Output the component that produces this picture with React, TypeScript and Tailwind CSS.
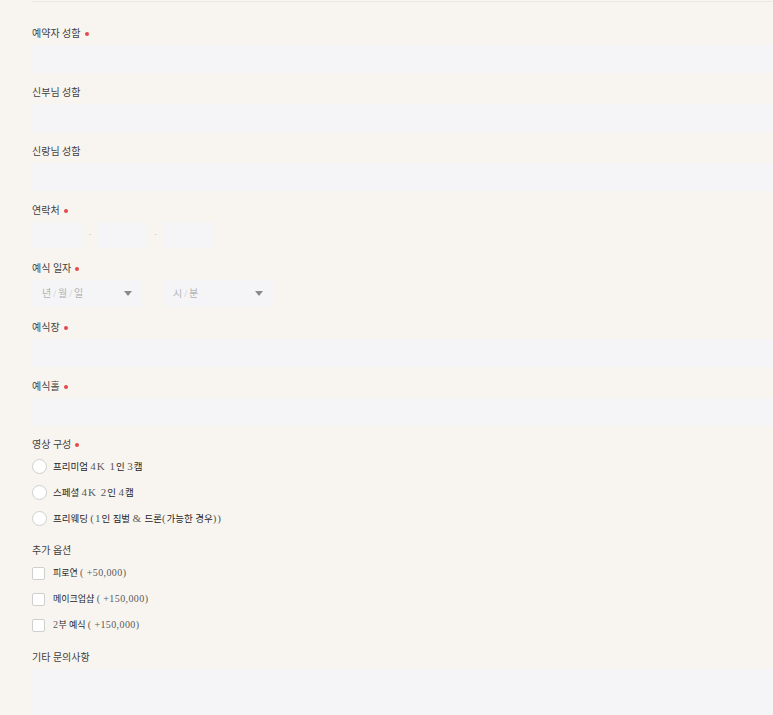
import React from "react";

const Dot = () => (
  <span className="ml-[4px] inline-block w-[4px] h-[4px] rounded-full bg-[#e5484d]" />
);

const Label = ({ text, required }: { text: string; required?: boolean }) => (
  <div className="h-[13px] flex items-center text-[10px] text-[#3f3f3f] leading-none">
    <span>{text}</span>
    {required && <Dot />}
  </div>
);

const Field = ({ label, required }: { label: string; required?: boolean }) => (
  <div className="flex flex-col gap-[5px] pb-[13px]">
    <Label text={label} required={required} />
    <div className="h-[28px] w-full bg-[#f5f5f7]" />
  </div>
);

const Caret = () => (
  <svg width="8" height="5" viewBox="0 0 8 5" className="fill-[#8a8a8a]">
    <path d="M0 0 L8 0 L4 5 Z" />
  </svg>
);

const Select = ({ parts }: { parts: string[] }) => (
  <div className="w-[110px] h-[27px] bg-[#f5f5f7] flex items-center justify-between pl-[10px] pr-[10px] text-[10px] text-[#b3b3b3]">
    <span className="flex items-center">
      {parts.map((p, i) => (
        <React.Fragment key={p}>
          {i > 0 && <span className="mx-[2px] text-[#c4c4c4]">/</span>}
          <span>{p}</span>
        </React.Fragment>
      ))}
    </span>
    <Caret />
  </div>
);

const Radio = ({ children }: { children: React.ReactNode }) => (
  <div className="h-[26px] flex items-center gap-[6px]">
    <span className="w-[15px] h-[15px] rounded-full bg-white border border-[#cfcfcf]" />
    <span className="text-[9.5px] text-[#262626]">{children}</span>
  </div>
);

const Check = ({ children }: { children: React.ReactNode }) => (
  <div className="h-[26px] flex items-center gap-[8px]">
    <span className="w-[13px] h-[13px] rounded-[2px] bg-white border border-[#cfcfcf]" />
    <span className="text-[9px] text-[#262626]">{children}</span>
  </div>
);

const Num = ({ children }: { children: React.ReactNode }) => (
  <span className="text-[10px] text-[#5a5a5a] tracking-[0.4px]">{children}</span>
);

const BigNum = ({ children }: { children: React.ReactNode }) => (
  <span className="text-[11px] text-[#5a5a5a] tracking-[1px]">{children}</span>
);

export default function App() {
  return (
    <div className="min-h-[715px] bg-[#f8f5f0] pt-px pl-8 font-['Liberation_Serif','Noto_Sans_CJK_KR',sans-serif] overflow-hidden">
      <div className="border-t border-[#ece8e2]" />
      <div className="pt-[25px]">
        <Field label="예약자 성함" required />
        <Field label="신부님 성함" />
        <Field label="신랑님 성함" />

        <div className="flex flex-col gap-[5px] pb-[14px]">
          <Label text="연락처" required />
          <div className="flex items-center">
            <div className="w-[51px] h-[26px] bg-[#f5f5f7]" />
            <span className="w-[14px] text-center text-[8px] text-[#c8c8c8]">-</span>
            <div className="w-[51px] h-[26px] bg-[#f5f5f7]" />
            <span className="w-[15px] text-center text-[8px] text-[#c8c8c8]">-</span>
            <div className="w-[51px] h-[26px] bg-[#f5f5f7]" />
          </div>
        </div>

        <div className="flex flex-col gap-[5px] pb-[14px]">
          <Label text="예식 일자" required />
          <div className="flex items-center gap-[21px]">
            <Select parts={["년", "월", "일"]} />
            <Select parts={["시", "분"]} />
          </div>
        </div>

        <Field label="예식장" required />
        <div className="flex flex-col gap-[5px] pb-[12px]">
          <Label text="예식홀" required />
          <div className="h-[28px] w-full bg-[#f5f5f7]" />
        </div>

        <div className="flex flex-col gap-[2px] pb-[13px]">
          <Label text="영상 구성" required />
          <div className="flex flex-col">
            <Radio>
              프리미엄 <BigNum>4K 1</BigNum>인 <BigNum>3</BigNum>캠
            </Radio>
            <Radio>
              스페셜 <BigNum>4K 2</BigNum>인 <BigNum>4</BigNum>캠
            </Radio>
            <Radio>
              프리웨딩 <BigNum>(1</BigNum>인 짐벌 <BigNum>&amp;</BigNum> 드론<BigNum>(</BigNum>가능한 경우<BigNum>))</BigNum>
            </Radio>
          </div>
        </div>

        <div className="flex flex-col gap-[3px] pb-[13px]">
          <Label text="추가 옵션" />
          <div className="flex flex-col">
            <Check>
              피로연 <Num>( +50,000)</Num>
            </Check>
            <Check>
              메이크업샵 <Num>( +150,000)</Num>
            </Check>
            <Check>
              <Num>2</Num>부 예식 <Num>( +150,000)</Num>
            </Check>
          </div>
        </div>

        <div className="flex flex-col gap-[5px]">
          <Label text="기타 문의사항" />
          <div className="h-[80px] w-full bg-[#f5f5f7]" />
        </div>
      </div>
    </div>
  );
}
